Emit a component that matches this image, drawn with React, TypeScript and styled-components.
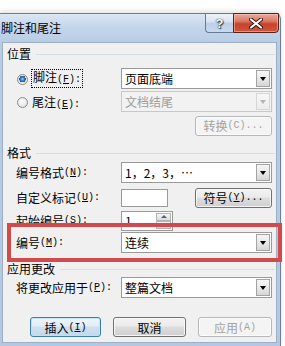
import React from 'react';
import styled, { createGlobalStyle } from 'styled-components';

const Global = createGlobalStyle`
  html, body { margin: 0; padding: 0; background: #ffffff; }
  body {
    width: 285px; height: 346px; overflow: hidden;
    font-family: "Noto Sans CJK SC", "Liberation Sans", sans-serif;
    font-size: 12px; color: #000;
  }
`;

const Window = styled.div`
  margin-top: 13px;
  width: 281px;
  height: 333px;
  box-sizing: border-box;
  border-top: 1px solid #6f7f92;
  border-right: 1px solid #6f7f92;
  border-top-right-radius: 6px;
  background: linear-gradient(180deg, #dbe6f3 0px, #c3d5ea 14px, #b7cce5 30px, #b3c8e2 100%);
  box-shadow: 0 -2px 5px rgba(0, 0, 0, 0.12);
  display: flex;
  flex-direction: column;
`;

const TitleBar = styled.div`
  display: flex;
  align-items: flex-start;
  height: 28px;
`;

const Title = styled.div`
  padding-left: 1px;
  line-height: 28px;
  color: #000;
`;

const Caption = styled.div`
  display: flex;
  margin: -1px 1px 0 auto;
  height: 20px;
`;

const HelpBtn = styled.div`
  width: 28px;
  height: 20px;
  box-sizing: border-box;
  border: 1px solid #6a7a8e;
  border-right: none;
  border-bottom-left-radius: 4px;
  background: linear-gradient(180deg, #eef3fa 0%, #d6e2f0 45%, #bccfe6 50%, #c9daee 100%);
  display: flex;
  align-items: center;
  justify-content: center;
  font-family: "Liberation Sans", sans-serif;
  font-weight: bold;
  font-size: 13px;
  color: #fff;
  text-shadow: 0 0 1px #2b3a4c, 0 0 1px #2b3a4c, 1px 1px 1px #2b3a4c;
`;

const CloseBtn = styled.div`
  width: 46px;
  height: 20px;
  box-sizing: border-box;
  border: 1px solid #5a2118;
  border-bottom-right-radius: 4px;
  background: linear-gradient(180deg, #e9aa9a 0%, #d97a65 40%, #c9432b 55%, #d0563d 100%);
  box-shadow: inset 0 0 0 1px rgba(255, 220, 210, 0.45);
  display: flex;
  align-items: center;
  justify-content: center;
`;

const Client = styled.div`
  margin: 0 3px 0 2px;
  height: 301px;
  box-sizing: border-box;
  border: 1px solid #9cafc4;
  background: #f0f0f0;
  display: flex;
  flex-direction: column;
`;

const SectionHeader = styled.div<{ $mt: number }>`
  display: flex;
  align-items: center;
  gap: 5px;
  height: 14px;
  line-height: 14px;
  margin-top: ${p => p.$mt}px;
  padding: 0 1px 0 4px;
  &::after {
    content: "";
    flex: 1;
    height: 1px;
    background: #d5dfe5;
  }
`;

const FieldRow = styled.div<{ $mt?: number; $label?: number }>`
  display: grid;
  grid-template-columns: ${p => p.$label ?? 118}px 151px;
  align-items: center;
  height: 21px;
  margin-top: ${p => p.$mt ?? 0}px;
`;

const FieldLabel = styled.div<{ $indent?: number }>`
  padding-left: ${p => p.$indent ?? 13}px;
  white-space: nowrap;
  display: flex;
  align-items: center;
`;

const Mn = styled.span<{ $muted?: boolean }>`
  font-family: "Liberation Mono", monospace;
  font-size: 10px;
  color: ${p => (p.$muted ? 'inherit' : '#000')};
`;

const RadioLabel = styled.div`
  padding-left: 14px;
  display: flex;
  align-items: center;
  gap: 4px;
  white-space: nowrap;
`;

const Radio = styled.span<{ $checked?: boolean }>`
  width: 11px;
  height: 11px;
  box-sizing: border-box;
  border-radius: 50%;
  border: 1px solid #8b8b8b;
  background: ${p =>
    p.$checked
      ? 'radial-gradient(circle at 50% 45%, #a9d7f7 0, #3f86cf 1.6px, #1d5597 3.2px, #e9e9e9 3.4px, #f7f7f7 100%)'
      : 'radial-gradient(circle at 45% 40%, #ffffff 0, #ebebeb 55%, #d2d2d2 100%)'};
  margin-top: 2px;
`;

const Focus = styled.span`
  outline: 1px dotted #000;
  outline-offset: 0;
  padding: 0 1px;
  line-height: 14px;
`;

const Combo = styled.div<{ $disabled?: boolean }>`
  display: flex;
  align-items: center;
  height: 21px;
  box-sizing: border-box;
  border: 1px solid ${p => (p.$disabled ? '#c8c8c8' : '#9a9a9a')};
  background: ${p => (p.$disabled ? '#f2f2f2' : '#ffffff')};
  color: ${p => (p.$disabled ? '#9d9d9d' : '#000')};
  padding: 1px 1px 1px 3px;
`;

const ComboText = styled.span`
  flex: 1;
  white-space: nowrap;
  line-height: 17px;
`;

const ComboArrow = styled.div<{ $disabled?: boolean }>`
  width: 14px;
  height: 17px;
  box-sizing: border-box;
  border: 1px solid ${p => (p.$disabled ? '#d6d6d6' : '#a3a3a3')};
  background: ${p =>
    p.$disabled
      ? 'linear-gradient(180deg, #f7f7f7, #ececec)'
      : 'linear-gradient(180deg, #f6f6f6 0%, #e9e9e9 50%, #d6d6d6 100%)'};
  display: flex;
  align-items: center;
  justify-content: center;
  &::after {
    content: "";
    border-left: 3.5px solid transparent;
    border-right: 3.5px solid transparent;
    border-top: 4px solid ${p => (p.$disabled ? '#b4b4b4' : '#000')};
  }
`;

const ControlCell = styled.div<{ $justify?: string }>`
  display: flex;
  align-items: center;
  justify-content: ${p => p.$justify ?? 'flex-start'};
  height: 100%;
`;

const TextBox = styled.div`
  width: 47px;
  height: 18px;
  box-sizing: border-box;
  border: 1px solid #9a9a9a;
  background: #fff;
`;

const Spinner = styled.div`
  display: flex;
  width: 52px;
  height: 20px;
  box-sizing: border-box;
  border: 1px solid #9a9a9a;
  background: #fff;
  padding: 1px;
`;

const SpinText = styled.span`
  flex: 1;
  padding-left: 2px;
  line-height: 16px;
`;

const SpinArrows = styled.div`
  width: 15px;
  display: flex;
  flex-direction: column;
`;

const SpinBtn = styled.div<{ $dir: 'up' | 'down' }>`
  flex: 1;
  box-sizing: border-box;
  border: 1px solid #b5b5b5;
  background: linear-gradient(180deg, #f6f6f6, #dadada);
  display: flex;
  align-items: center;
  justify-content: center;
  &::after {
    content: "";
    border-left: 3px solid transparent;
    border-right: 3px solid transparent;
    ${p => (p.$dir === 'up' ? 'border-bottom: 3px solid #4d6185;' : 'border-top: 3px solid #4d6185;')}
  }
`;

const Btn = styled.div<{ $w: number; $variant?: 'normal' | 'default' | 'disabled' }>`
  width: ${p => p.$w}px;
  height: 20px;
  box-sizing: border-box;
  border-radius: 3px;
  border: 1px solid
    ${p => (p.$variant === 'default' ? '#3c7fb1' : p.$variant === 'disabled' ? '#b4b8bb' : '#707070')};
  background: ${p =>
    p.$variant === 'disabled'
      ? '#f4f4f4'
      : p.$variant === 'default'
      ? 'linear-gradient(180deg, #eef5fb 0%, #e2edf7 45%, #cfe0ee 50%, #c4d8ea 100%)'
      : 'linear-gradient(180deg, #f2f2f2 0%, #ebebeb 45%, #dddddd 50%, #cfcfcf 100%)'};
  box-shadow: inset 0 0 0 1px ${p => (p.$variant === 'default' ? 'rgba(190,225,245,0.9)' : 'rgba(252,252,252,0.85)')};
  color: ${p => (p.$variant === 'disabled' ? '#a3a3a3' : '#000')};
  display: flex;
  align-items: center;
  justify-content: center;
  white-space: nowrap;
`;

const Highlight = styled.div`
  position: relative;
  z-index: 2;
  margin: -8px 0 0 4px;
  width: 275px;
  box-sizing: border-box;
  border: 4px solid #d24b4c;
  padding: 5px 0;
`;

const ButtonRow = styled.div`
  display: flex;
  justify-content: flex-end;
  gap: 12px;
  margin-top: 19px;
  padding-right: 4px;
`;

const CloseGlyph = () => (
  <svg width="14" height="11" viewBox="0 0 14 11">
    <path d="M2 1.5 L12 9.5 M12 1.5 L2 9.5" stroke="#3a1410" strokeWidth="4" strokeLinecap="round" />
    <path d="M2 1.5 L12 9.5 M12 1.5 L2 9.5" stroke="#ffffff" strokeWidth="2.2" strokeLinecap="round" />
  </svg>
);

export default function App() {
  return (
    <>
      <Global />
      <Window>
        <TitleBar>
          <Title>脚注和尾注</Title>
          <Caption>
            <HelpBtn>?</HelpBtn>
            <CloseBtn>
              <CloseGlyph />
            </CloseBtn>
          </Caption>
        </TitleBar>
        <Client>
          <SectionHeader $mt={4}>位置</SectionHeader>
          <FieldRow $mt={7}>
            <RadioLabel>
              <Radio $checked />
              <Focus>
                脚注<Mn>(<u>F</u>):</Mn>
              </Focus>
            </RadioLabel>
            <Combo>
              <ComboText>页面底端</ComboText>
              <ComboArrow />
            </Combo>
          </FieldRow>
          <FieldRow $mt={2}>
            <RadioLabel>
              <Radio />
              <span>
                尾注<Mn>(<u>E</u>):</Mn>
              </span>
            </RadioLabel>
            <Combo $disabled>
              <ComboText>文档结尾</ComboText>
              <ComboArrow $disabled />
            </Combo>
          </FieldRow>
          <FieldRow $mt={3}>
            <span />
            <ControlCell $justify="flex-end">
              <Btn $w={77} $variant="disabled">
                转换<Mn $muted>(C)...</Mn>
              </Btn>
            </ControlCell>
          </FieldRow>

          <SectionHeader $mt={10}>格式</SectionHeader>
          <FieldRow $mt={2}>
            <FieldLabel>
              编号格式<Mn>(<u>N</u>):</Mn>
            </FieldLabel>
            <Combo>
              <ComboText>1，2，3，⋯</ComboText>
              <ComboArrow />
            </Combo>
          </FieldRow>
          <FieldRow $mt={4}>
            <FieldLabel>
              自定义标记<Mn>(<u>U</u>):</Mn>
            </FieldLabel>
            <ControlCell $justify="space-between">
              <TextBox />
              <Btn $w={77}>
                符号<Mn>(<u>Y</u>)...</Mn>
              </Btn>
            </ControlCell>
          </FieldRow>
          <FieldRow $mt={2}>
            <FieldLabel>
              起始编号<Mn>(<u>S</u>):</Mn>
            </FieldLabel>
            <ControlCell>
              <Spinner>
                <SpinText>1</SpinText>
                <SpinArrows>
                  <SpinBtn $dir="up" />
                  <SpinBtn $dir="down" />
                </SpinArrows>
              </Spinner>
            </ControlCell>
          </FieldRow>

          <Highlight>
            <FieldRow $label={110}>
              <FieldLabel $indent={5}>
                编号<Mn>(<u>M</u>):</Mn>
              </FieldLabel>
              <Combo>
                <ComboText>连续</ComboText>
                <ComboArrow />
              </Combo>
            </FieldRow>
          </Highlight>

          <SectionHeader $mt={0}>应用更改</SectionHeader>
          <FieldRow $mt={1}>
            <FieldLabel>
              将更改应用于<Mn>(<u>P</u>):</Mn>
            </FieldLabel>
            <Combo>
              <ComboText>整篇文档</ComboText>
              <ComboArrow />
            </Combo>
          </FieldRow>

          <ButtonRow>
            <Btn $w={71} $variant="default">
              插入<Mn>(<u>I</u>)</Mn>
            </Btn>
            <Btn $w={73}>取消</Btn>
            <Btn $w={74} $variant="disabled">
              应用<Mn $muted>(A)</Mn>
            </Btn>
          </ButtonRow>
        </Client>
      </Window>
    </>
  );
}
